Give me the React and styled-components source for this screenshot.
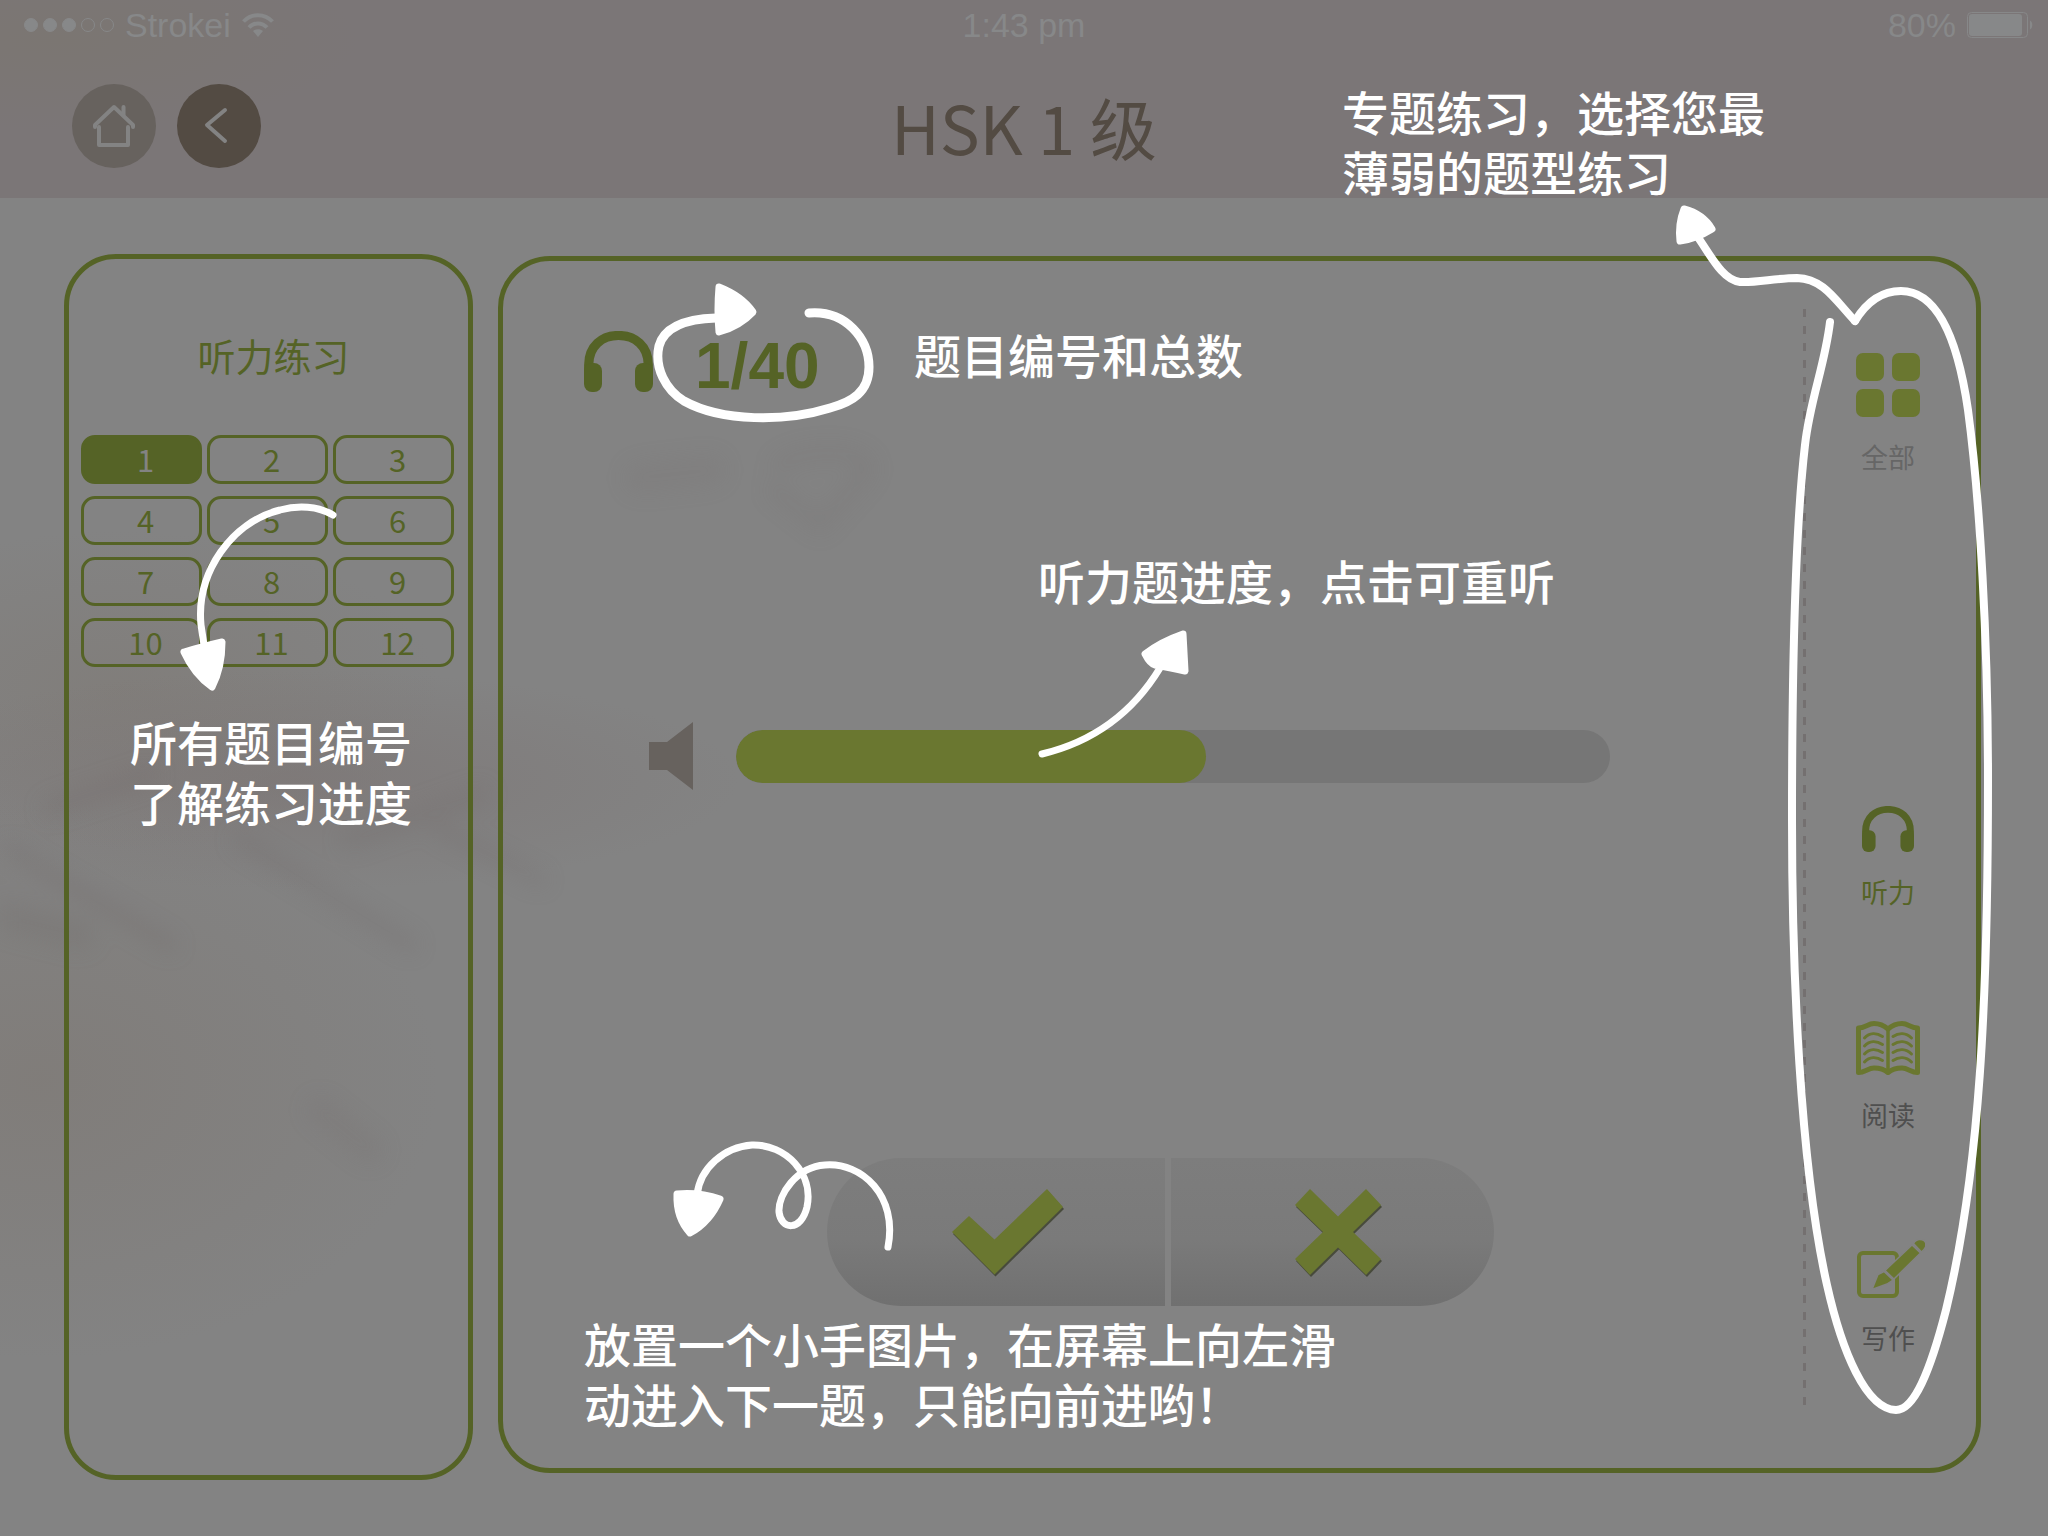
import React from "react";
import styled, { createGlobalStyle } from "styled-components";

const color = {
  page: "#838383",
  header: "#7b7677",
  olive: "#556326",
  leaf: "#6a7730",
  brown: "#534b43",
  stone: "#67625e",
  status: "#878889",
  track: "#767676",
  muted: "#666666",
  ink: "#4f4f4f",
};

const cjk = `"Noto Sans CJK SC", "Noto Sans", sans-serif`;

const GlobalStyle = createGlobalStyle`
  *, *::before, *::after { box-sizing: border-box; }
  body { margin: 0; background: ${color.page}; font-family: ${cjk}; }
  button { font: inherit; border: 0; padding: 0; background: none; cursor: pointer; }
  h1, h2, p { margin: 0; font-weight: 400; }
  svg { display: block; flex: none; }
`;

const Page = styled.div`
  position: relative;
  isolation: isolate;
  display: flex;
  flex-direction: column;
  min-height: 100vh;
  overflow: hidden;
  background:
    radial-gradient(ellipse 400px 280px at 40px 1080px, rgba(125, 118, 112, 0.5), transparent),
    radial-gradient(ellipse 440px 110px at 300px 780px, rgba(122, 113, 112, 0.5), transparent),
    radial-gradient(ellipse 320px 160px at 120px 690px, rgba(126, 120, 114, 0.5), transparent),
    ${color.page};
`;

const Backdrop = styled.svg`
  position: absolute;
  top: 0;
  left: 0;
  z-index: -1;
  filter: blur(10px);
`;

const Header = styled.header`
  background: radial-gradient(ellipse 300px 90px at 60px 40px, #7b7672, transparent), ${color.header};
`;

const StatusBar = styled.div`
  display: grid;
  grid-template-columns: 1fr auto 1fr;
  align-items: center;
  height: 50px;
  padding: 0 15px;
  color: ${color.status};
  font-family: "Liberation Sans", Arial, sans-serif;
  font-size: 34px;
  line-height: 40px;
`;

const StatusGroup = styled.div`
  display: flex;
  align-items: center;
  justify-content: ${(p) => p.$align || "flex-start"};
  gap: 11px;
`;

const Signal = styled.span`
  display: flex;
  gap: 5px;
  padding-left: 9px;
`;

const SignalDot = styled.i`
  width: 14px;
  height: 14px;
  border: 1px solid ${color.status};
  border-radius: 50%;
  background: ${(p) => (p.$on ? color.status : "transparent")};
`;

const TitleBar = styled.div`
  display: grid;
  grid-template-columns: 1fr auto 1fr;
  align-items: center;
  height: 148px;
  padding: 4px 72px 0;
`;

const NavButtons = styled.nav`
  display: flex;
  gap: 21px;
`;

const RoundButton = styled.button`
  display: grid;
  place-items: center;
  width: 84px;
  height: 84px;
  border-radius: 50%;
  background: ${(p) => (p.$dark ? color.brown : color.stone)};
`;

const Title = styled.h1`
  color: ${color.brown};
  font-size: 67px;
  line-height: 96px;
`;

const Body = styled.main`
  flex: 1;
  display: grid;
  grid-template-columns: 409px minmax(0, 1fr);
  gap: 25px;
  padding: 56px 67px 56px 64px;
`;

const Panel = styled.section`
  position: relative;
  border: 5px solid ${color.olive};
  border-radius: 52px;
`;

const Sidebar = styled(Panel)`
  padding: 72px 14px 0 12px;
`;

const SidebarTitle = styled.h2`
  padding-left: 12px;
  color: ${color.olive};
  font-size: 38px;
  line-height: 48px;
  text-align: center;
`;

const NumberGrid = styled.div`
  display: grid;
  grid-template-columns: repeat(3, 1fr);
  gap: 12px 5px;
  margin-top: 56px;
`;

const NumberButton = styled.button`
  && {
    height: 49px;
    padding: 0 0 2px 8px;
    border: 3px solid ${color.olive};
    border-radius: 14px;
    background: ${(p) => (p.$current ? color.olive : "transparent")};
    color: ${(p) => (p.$current ? color.page : color.olive)};
    font-size: 31px;
    line-height: 41px;
  }
`;

const QuestionPanel = styled(Panel)`
  display: flex;
  margin: 2px 0 7px;
`;

const Question = styled.div`
  flex: 1;
  min-width: 0;
  display: flex;
  flex-direction: column;
  padding-top: 70px;
`;

const Counter = styled.div`
  display: flex;
  align-items: center;
  gap: 42px;
  height: 61px;
  padding-left: 81px;
  color: ${color.olive};
`;

const CounterText = styled.span`
  padding-top: 8px;
  font-family: "Liberation Sans", Arial, sans-serif;
  font-size: 64px;
  font-weight: 700;
  line-height: 72px;
`;

const Player = styled.div`
  display: flex;
  align-items: center;
  gap: 43px;
  margin-top: 330px;
  padding: 0 193px 0 146px;
`;

const PlayerBar = styled.progress`
  flex: 1;
  min-width: 0;
  height: 53px;
  appearance: none;
  border: 0;
  border-radius: 27px;
  overflow: hidden;
  background: ${color.track};
  &::-webkit-progress-bar {
    background: ${color.track};
  }
  &::-webkit-progress-value {
    border-radius: 27px;
    background: ${color.leaf};
  }
`;

const Answers = styled.div`
  display: grid;
  grid-template-columns: 338fr 323fr;
  gap: 6px;
  width: 667px;
  height: 148px;
  margin: 368px 0 0 324px;
  border-radius: 74px;
  overflow: hidden;
`;

const AnswerButton = styled.button`
  && {
    display: grid;
    place-items: center;
    padding-left: ${(p) => p.$inset}px;
    background: linear-gradient(#7d7d7d, #7a7a7a 55%, #707070);
  }
  svg {
    filter: drop-shadow(1px 2px 0 rgba(60, 64, 45, 0.8));
  }
`;

const Rail = styled.nav`
  display: flex;
  flex-direction: column;
  justify-content: space-between;
  width: 173px;
  margin: 48px 0 55px;
  padding: 44px 3px 59px 0;
  background: repeating-linear-gradient(#747070 0 8px, transparent 8px 17px) left / 3px 100% no-repeat;
`;

const RailGroup = styled.div`
  display: flex;
  flex-direction: column;
  gap: 103px;
`;

const ModeButton = styled.button`
  && {
    display: flex;
    flex-direction: column;
    align-items: center;
    gap: 24px;
    color: ${(p) => p.$tone};
    font-size: 27px;
    line-height: 32px;
  }
`;

const ModeIcon = styled.span`
  display: flex;
  align-items: flex-end;
  height: 64px;
  color: ${(p) => (p.$active ? color.olive : color.leaf)};
`;

const Note = styled.p`
  position: absolute;
  top: ${(p) => p.$top}px;
  left: ${(p) => (p.$left === undefined ? "auto" : `${p.$left}px`)};
  right: ${(p) => (p.$right === undefined ? "auto" : `${p.$right}px`)};
  color: #ffffff;
  font-family: "Liberation Sans", ${cjk};
  font-size: 47px;
  font-weight: 500;
  line-height: 60px;
  white-space: nowrap;
`;

const Doodle = styled.svg`
  position: absolute;
  top: ${(p) => p.$top}px;
  left: ${(p) => (p.$left === undefined ? "auto" : `${p.$left}px`)};
  right: ${(p) => (p.$right === undefined ? "auto" : `${p.$right}px`)};
  overflow: visible;
  fill: none;
  stroke: #ffffff;
  stroke-width: ${(p) => p.$weight || 7}px;
  stroke-linecap: round;
  stroke-linejoin: round;
  pointer-events: none;
  .head {
    fill: #ffffff;
    stroke-width: 7px;
  }
`;

const WifiIcon = () => (
  <svg width="32" height="24" viewBox="0 0 32 24" fill="none" stroke="currentColor" strokeWidth="4">
    <path d="M1.500 8.500C9.500 0 22.500 0 30.500 8.500" />
    <path d="M7 14.500c5-5.500 13-5.500 18 0" />
    <path d="M16 24l-5-6c3-2.500 7-2.500 10 0z" fill="currentColor" stroke="none" />
  </svg>
);

const BatteryIcon = () => (
  <svg width="66" height="26" viewBox="0 0 66 26" fill="none" stroke="currentColor">
    <rect x="0.500" y="0.500" width="60" height="25" rx="4" />
    <rect x="2" y="2" width="53" height="22" rx="3" fill="currentColor" stroke="none" />
    <path d="M63 8.500c3 1 3 8 0 9z" fill="currentColor" stroke="none" />
  </svg>
);

const HomeIcon = () => (
  <svg width="42" height="44" viewBox="0 0 42 44" fill="none" stroke={color.page} strokeWidth="4" strokeLinecap="round" strokeLinejoin="round">
    <path d="M2 23V21L21 3l19 18v2" />
    <path d="M6 23v18h29V23M30.500 3v8" />
  </svg>
);

const BackIcon = () => (
  <svg width="30" height="38" viewBox="0 0 30 38" fill="none" stroke={color.page} strokeWidth="4" strokeLinecap="round" strokeLinejoin="round">
    <path d="M21 3L3 18l18 16" />
  </svg>
);

const HeadphonesIcon = ({ width, height }) => (
  <svg width={width} height={height} viewBox="0 0 69 61" fill="currentColor">
    <path d="M4.700 46V34C4.700 15 18 4.500 34.500 4.500S64.300 15 64.300 34v12" fill="none" stroke="currentColor" strokeWidth="9.200" />
    <rect y="32" width="18" height="29" rx="8" />
    <rect x="51" y="32" width="18" height="29" rx="8" />
  </svg>
);

const SpeakerIcon = () => (
  <svg width="44" height="68" viewBox="0 0 44 68" fill={color.stone}>
    <path d="M0 20h18L44 0v68L18 48H0z" />
  </svg>
);

const CheckIcon = () => (
  <svg width="111" height="86" viewBox="0 0 111 86" fill={color.leaf}>
    <path d="M0 43l17-16 25.500 23.500L95 0l16 18-68.500 67.500z" />
  </svg>
);

const CrossIcon = () => (
  <svg width="86" height="86" viewBox="0 0 86 86" fill={color.leaf}>
    <path d="M15 0l28 27.500L71 0l15 16-28 27 28 27-15 16-28-27.500L15 86 0 70l28-27L0 16z" />
  </svg>
);

const GridIcon = () => (
  <svg width="64" height="64" viewBox="0 0 64 64" fill="currentColor">
    <rect width="28" height="28" rx="7" />
    <rect x="36" width="28" height="28" rx="7" />
    <rect y="36" width="28" height="28" rx="7" />
    <rect x="36" y="36" width="28" height="28" rx="7" />
  </svg>
);

const BookIcon = () => (
  <svg width="64" height="54" viewBox="0 0 64 54" fill="none" stroke="currentColor" strokeWidth="3" strokeLinecap="round">
    <path
      d="M2.500 7C9 7 12 2.500 18 2.500S28 4.500 32 8C36 4.500 40 2.500 46 2.500S55 7 61.500 7v44.500C55 51.500 52 47 46 47s-10 1-14 4.500C28 48 24 47 18 47S9 51.500 2.500 51.500z"
      strokeWidth="5"
      strokeLinejoin="round"
    />
    <path d="M32 8v42" strokeWidth="3.500" />
    {[17, 25, 33, 41].map((y) => (
      <path key={y} d={`M8.500 ${y}c5-5.500 12-5.500 18-1.500M37 ${y - 1.5}c6-4 13-4 18.500 1.500`} />
    ))}
  </svg>
);

const WriteIcon = () => (
  <svg width="74" height="59" viewBox="-6 0 74 59" fill="currentColor">
    <rect x="2" y="14" width="38" height="43" rx="4" fill="none" stroke="currentColor" strokeWidth="4" />
    <g stroke={color.page} strokeWidth="1.500">
      <path d="M55 6L63.500 14 37 40 28 31.500z" />
      <path d="M27 32.500l9 8.500-6 4L15 50.500l6-15z" />
      <path d="M56.500 4.500c4-7 15-4 12 3.500-1 2-2 3.500-4 5z" />
    </g>
  </svg>
);

const numbers = Array.from({ length: 12 }, (_, i) => i + 1);

const modes = [
  { label: "听力", tone: color.olive, active: true, icon: <HeadphonesIcon width={52} height={46} /> },
  { label: "阅读", tone: color.ink, icon: <BookIcon /> },
  { label: "写作", tone: color.ink, icon: <WriteIcon /> },
];

const Mode = ({ label, tone, active, icon }) => (
  <ModeButton type="button" $tone={tone}>
    <ModeIcon $active={active}>{icon}</ModeIcon>
    {label}
  </ModeButton>
);

export default function App() {
  return (
    <Page>
      <GlobalStyle />
      <Backdrop width="1500" height="1300" fill="none" stroke="#6f6768" strokeLinecap="round" aria-hidden="true">
        <path d="M10 850L170 945" strokeWidth="14" opacity="0.28" />
        <path d="M240 840L410 945" strokeWidth="14" opacity="0.28" />
        <path d="M440 830L540 880" strokeWidth="12" opacity="0.28" />
        <path d="M50 808L150 775" strokeWidth="16" opacity="0.25" />
        <path d="M350 840L480 795" strokeWidth="20" opacity="0.2" />
        <path d="M0 915L80 935" strokeWidth="30" opacity="0.2" />
        <path d="M320 1110l50 40" strokeWidth="26" opacity="0.16" />
        <path d="M640 478L710 470" strokeWidth="30" opacity="0.14" />
        <path d="M780 465c30-20 100-15 85 10l-45 50-45-35" strokeWidth="16" opacity="0.13" />
      </Backdrop>

      <Header>
        <StatusBar>
          <StatusGroup>
            <Signal>
              {[1, 1, 1, 0, 0].map((on, i) => (
                <SignalDot key={i} $on={on} />
              ))}
            </Signal>
            <span>Strokei</span>
            <WifiIcon />
          </StatusGroup>
          <span>1:43 pm</span>
          <StatusGroup $align="flex-end">
            <span>80%</span>
            <BatteryIcon />
          </StatusGroup>
        </StatusBar>
        <TitleBar>
          <NavButtons>
            <RoundButton type="button" aria-label="Home">
              <HomeIcon />
            </RoundButton>
            <RoundButton type="button" aria-label="Back" $dark>
              <BackIcon />
            </RoundButton>
          </NavButtons>
          <Title>HSK 1 级</Title>
        </TitleBar>
      </Header>

      <Body>
        <Sidebar>
          <SidebarTitle>听力练习</SidebarTitle>
          <NumberGrid>
            {numbers.map((n) => (
              <NumberButton key={n} type="button" $current={n === 1}>
                {n}
              </NumberButton>
            ))}
          </NumberGrid>
          <Doodle $top={241} $left={101} width="180" height="200" viewBox="170 500 180 200">
            <path d="M333 515C318 506 298 505 280 510C232 522 196 572 201 625L204 645" />
            <path className="head" d="M184 652Q205 646 222 642Q222 668 212 687Q194 674 184 652z" />
          </Doodle>
          <Note $top={456} $left={61}>
            所有题目编号
            <br />
            了解练习进度
          </Note>
        </Sidebar>

        <QuestionPanel>
          <Question>
            <Counter>
              <HeadphonesIcon width={69} height={61} />
              <CounterText>1/40</CounterText>
            </Counter>
            <Player>
              <SpeakerIcon />
              <PlayerBar value="470" max="874" aria-label="听力题进度" />
            </Player>
            <Answers>
              <AnswerButton type="button" aria-label="正确" $inset={22}>
                <CheckIcon />
              </AnswerButton>
              <AnswerButton type="button" aria-label="错误" $inset={10}>
                <CrossIcon />
              </AnswerButton>
            </Answers>
          </Question>

          <Rail>
            <Mode label="全部" tone={color.muted} icon={<GridIcon />} />
            <RailGroup>
              {modes.map((m) => (
                <Mode key={m.label} {...m} />
              ))}
            </RailGroup>
          </Rail>

          <Doodle $top={19} $left={147} $weight={9} width="230" height="150" viewBox="650 280 230 150">
            <path d="M809 313C846 310 869 339 869 367C869 392 852 402 830 408C785 422 722 422 684 401C666 390 654 368 659 346C664 328 684 319 716 318" />
            <path className="head" d="M719 287Q742 296 753 312Q740 326 719 332Q717 310 719 287z" />
          </Doodle>
          <Note $top={67} $left={411}>题目编号和总数</Note>

          <Doodle $top={359} $left={527} width="170" height="150" viewBox="1030 620 170 150">
            <path d="M1042 754C1092 742 1132 714 1160 668" />
            <path className="head" d="M1183 634Q1160 642 1145 654Q1150 664 1155 665Q1172 668 1185 671z" />
          </Doodle>
          <Note $top={293} $left={535}>听力题进度，点击可重听</Note>

          <Doodle $top={869} $left={157} width="250" height="130" viewBox="660 1130 250 130">
            <path d="M888 1247C898 1196 862 1162 825 1165C796 1167 778 1195 779 1212C781 1230 801 1232 807 1207C814 1174 786 1144 752 1145C724 1147 700 1168 697 1195" />
            <path className="head" d="M677 1194Q700 1192 720 1199Q710 1222 690 1233Q676 1218 677 1194z" />
          </Doodle>
          <Note $top={1056} $left={81}>
            放置一个小手图片，在屏幕上向左滑
            <br />
            动进入下一题，只能向前进哟！
          </Note>

          <Doodle $top={-61} $right={-24} $weight={8} width="330" height="1220" viewBox="1670 200 330 1220">
            <path d="M1855 321C1835 300 1824 279 1797 278C1776 278 1756 283 1740 282C1722 280 1710 254 1697 236" />
            <path className="head" d="M1684 209Q1703 214 1712 229Q1696 239 1680 241Q1678 224 1684 209z" />
            <path d="M1855 321C1866 303 1880 291 1901 291C1936 291 1957 334 1968 410C1980 500 1988 640 1988 780C1988 1000 1980 1170 1946 1310C1930 1372 1914 1410 1896 1410C1866 1409 1842 1352 1827 1285C1800 1165 1792 970 1792 820C1792 690 1794 540 1805 445C1810 400 1825 365 1830 322" />
          </Doodle>
          <Note $top={-176} $right={211}>
            专题练习，选择您最
            <br />
            薄弱的题型练习
          </Note>
        </QuestionPanel>
      </Body>
    </Page>
  );
}
